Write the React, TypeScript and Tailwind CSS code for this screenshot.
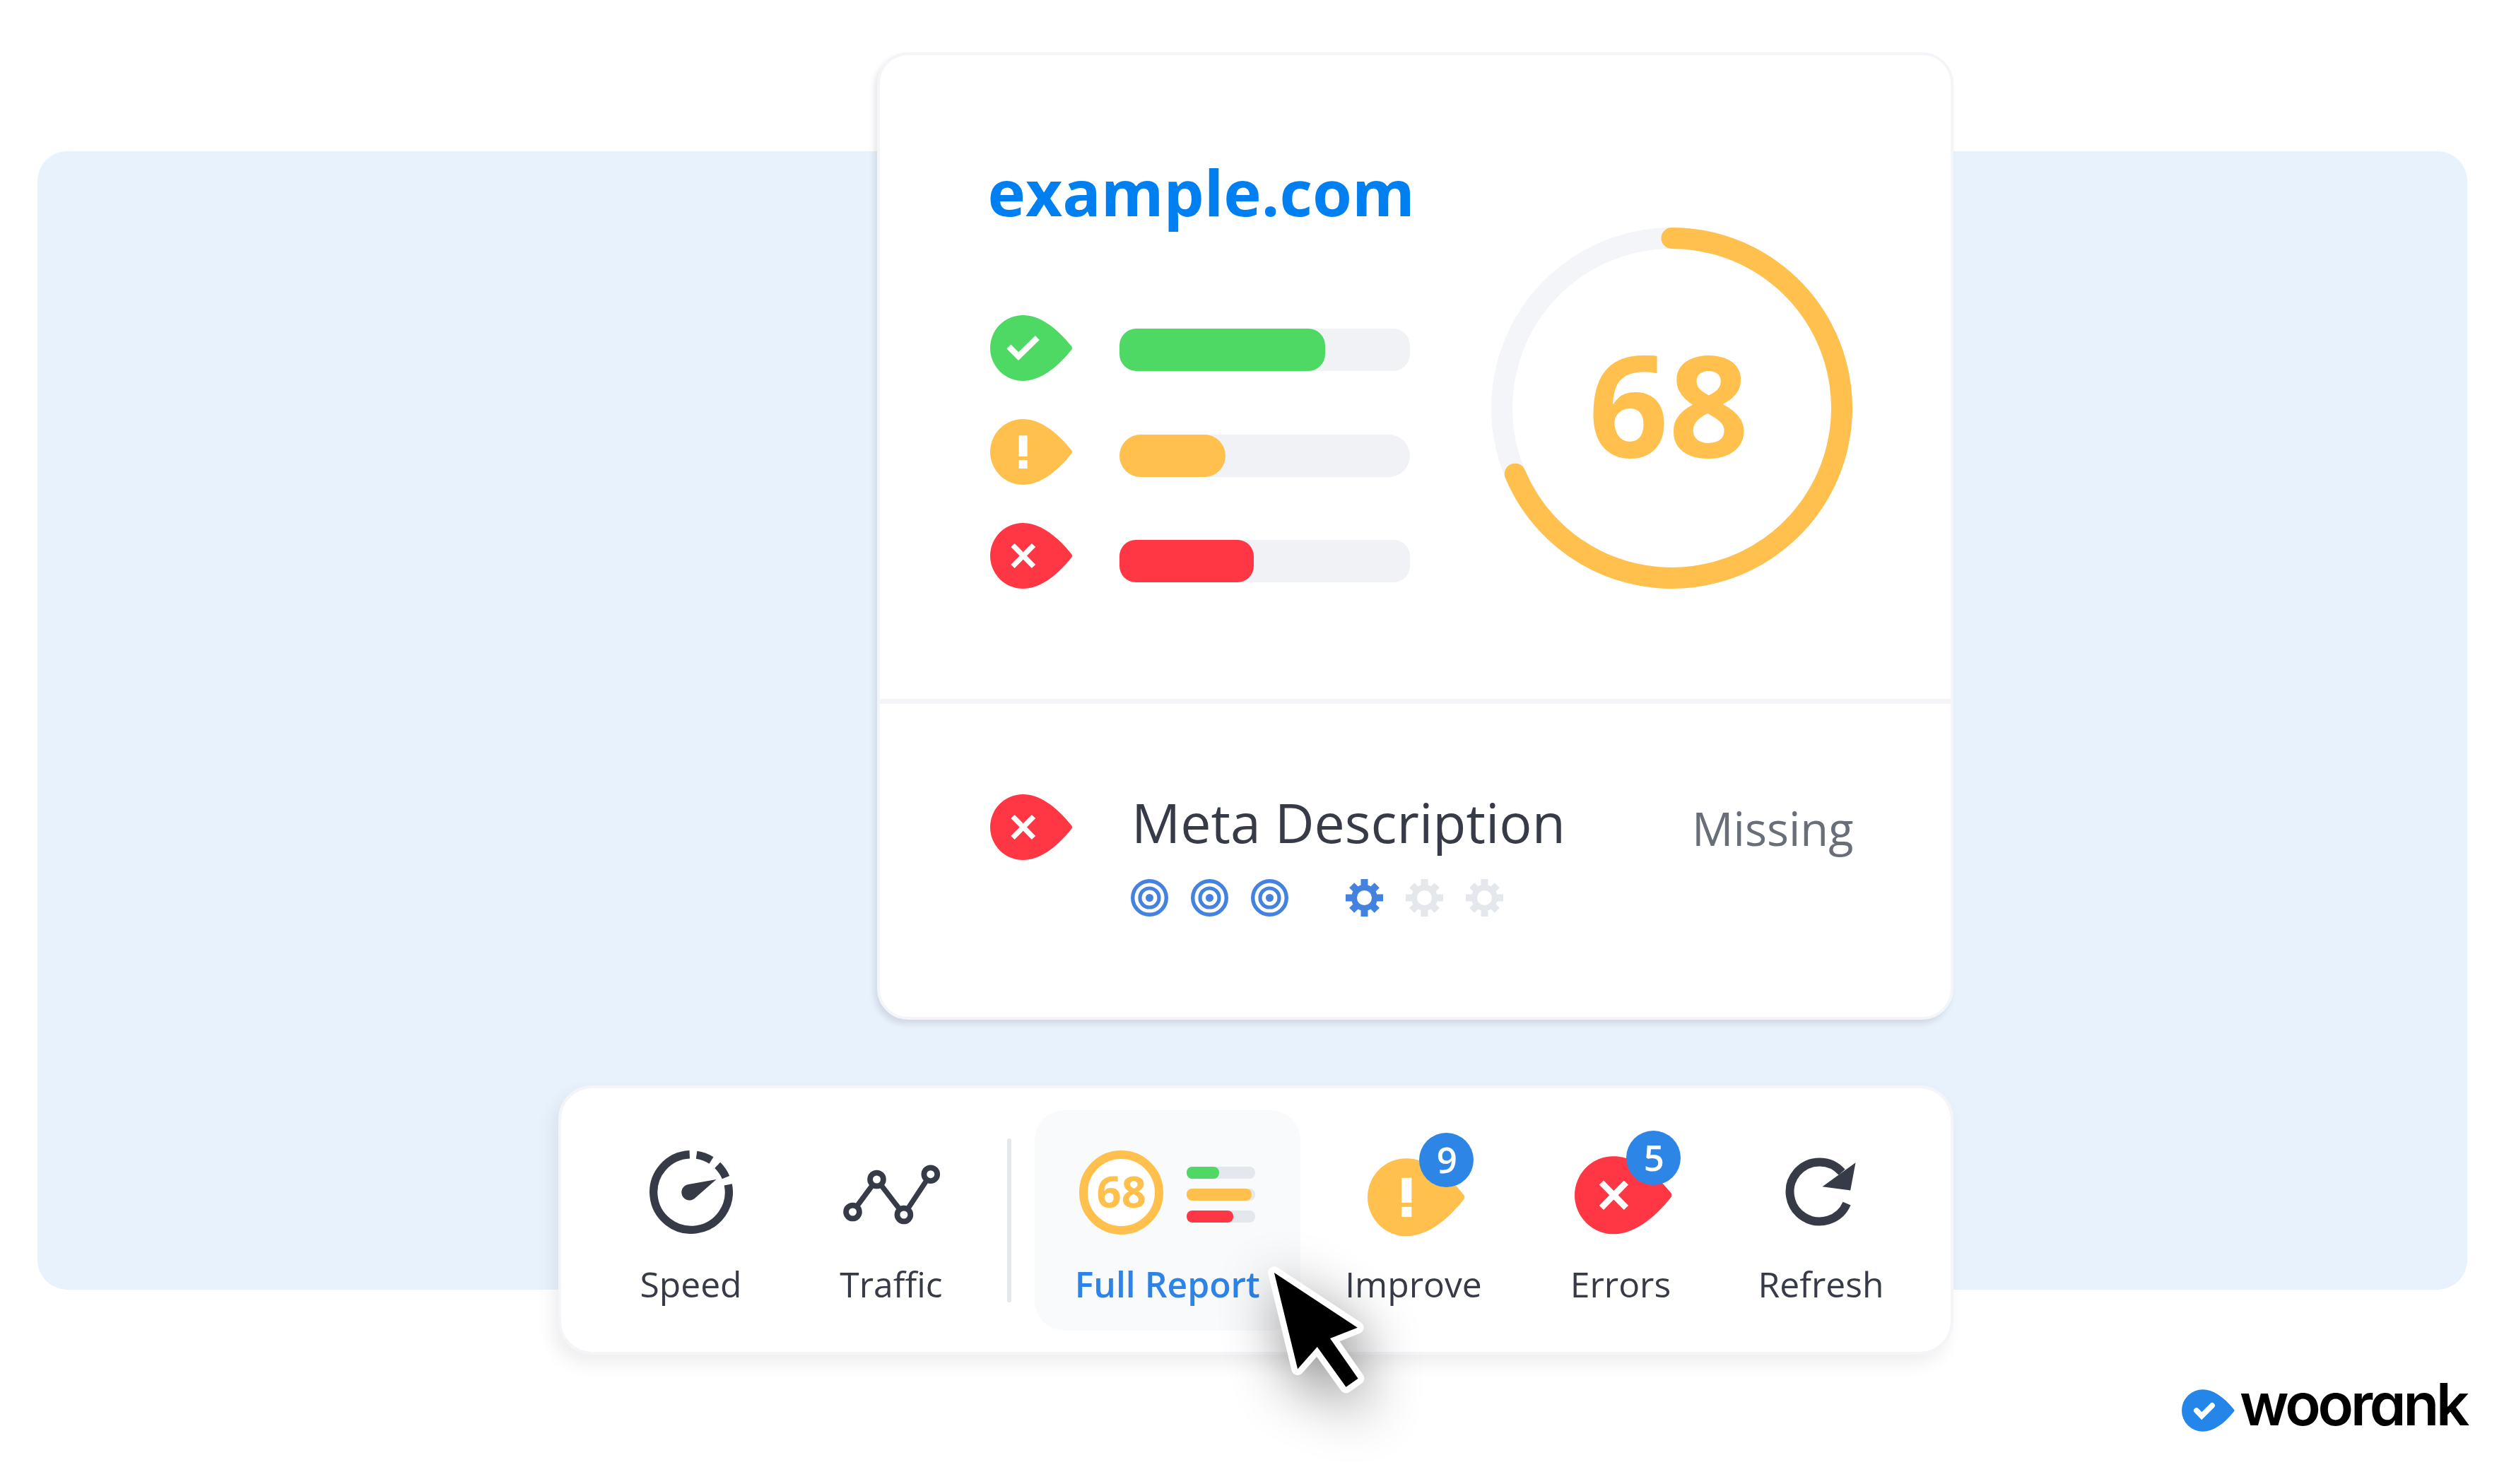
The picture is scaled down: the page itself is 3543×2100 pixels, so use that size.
import React from "react";

type Mark = "check" | "alert" | "cross";

const LEAF = "M46.5 0C68 0 92 15 115 44Q117 46.5 115 49C92 78 68 93 46.5 93A46.5 46.5 0 0 1 46.5 0Z";

function Leaf({ mark, className }: { mark: Mark; className: string }) {
  const fill = mark === "check" ? "#4dd964" : mark === "alert" ? "#ffc04d" : "#ff3745";
  return (
    <svg viewBox="0 0 116 93" className={className}>
      <path d={LEAF} fill={fill} />
      {mark === "check" && <path d="M26.4 44.5L40 58.2L66.8 32.1" fill="none" stroke="#fff" strokeWidth="8.4" />}
      {mark === "alert" && (
        <g fill="#fff">
          <rect x="40.6" y="23.3" width="12" height="29.6" />
          <rect x="40.6" y="58" width="12" height="12" />
        </g>
      )}
      {mark === "cross" && <path d="M32 31.5L61.5 61.5M61.5 31.5L32 61.5" fill="none" stroke="#fff" strokeWidth="7.4" />}
    </svg>
  );
}

function Target() {
  return (
    <svg viewBox="-26.5 -26.5 53 53" className="size-[53px]" fill="none" stroke="#4383df">
      <circle r="23.8" strokeWidth="5.4" />
      <circle r="13.5" strokeWidth="5.2" />
      <circle r="5.5" fill="#4383df" stroke="none" />
    </svg>
  );
}

function Gear({ className }: { className: string }) {
  return (
    <svg viewBox="-26.5 -26.5 53 53" className={className} stroke="currentColor" fill="none">
      <circle r="14.5" strokeWidth="8" />
      <path d="M0 -26.5V-15M0 26.5V15M-26.5 0H-15M26.5 0H15" strokeWidth="10" />
      <path d="M-17.8 -17.8L-10 -10M17.8 17.8L10 10M17.8 -17.8L10 -10M-17.8 17.8L-10 10" strokeWidth="10" />
    </svg>
  );
}

function ScoreRing() {
  return (
    <div className="mt-[244px] ml-[115px] grid size-[511px] shrink-0 place-items-center">
      <svg viewBox="-255.5 -255.5 511 511" className="col-start-1 row-start-1 size-full" fill="none" strokeWidth="30">
        <circle r="240.5" stroke="#f4f5f9" />
        <path d="M0 -240.5A240.5 240.5 0 1 1 -221.7 93.2" stroke="#ffc04d" strokeLinecap="round" />
      </svg>
      <span className="col-start-1 row-start-1 pr-[9px] pb-[14px] text-[198.5px] leading-none font-bold text-[#ffc04d]">68</span>
    </div>
  );
}

function SpeedIcon() {
  return (
    <svg viewBox="-59 -59 118 118" className="mt-[57px] size-[118px]">
      <g fill="none" stroke="#373b48" strokeWidth="11.3">
        <path d="M52.25 -10.53A53.3 53.3 0 1 1 -2.23 -53.25" />
        <path d="M7.6 -52.76A53.3 53.3 0 0 1 28.5 -45.05" />
        <path d="M37.2 -38.15A53.3 53.3 0 0 1 49 -20.9" />
      </g>
      <path d="M35.5 -18L-4 -11A11.3 11.3 0 1 0 5 8.7Z" fill="#373b48" />
    </svg>
  );
}

function TrafficIcon() {
  return (
    <svg viewBox="1191 1647 139 87" className="mt-[76px] h-[87px] w-[139px]" fill="none" stroke="#373b48">
      <path d="M1205.5 1715L1239.5 1669L1277.9 1719L1315.8 1661.7" strokeWidth="7.4" />
      <g fill="#fff" strokeWidth="7.8">
        <circle cx="1205.5" cy="1715" r="9.4" />
        <circle cx="1239.5" cy="1669" r="9.4" />
        <circle cx="1277.9" cy="1719" r="9.4" />
        <circle cx="1315.8" cy="1661.7" r="9.4" />
      </g>
    </svg>
  );
}

function RefreshIcon() {
  return (
    <svg viewBox="-48.5 -48.5 102 97" className="mt-[66.5px] h-[97px] w-[102px]">
      <path d="M38.6 16.6A42 42 0 1 1 31.7 -27.7" fill="none" stroke="#373b48" strokeWidth="12" />
      <path d="M51 -41.3L43.7 -2L4 -7.3Z" fill="#373b48" />
    </svg>
  );
}

function LeafWithBadge({ mark, count, className }: { mark: Mark; count: number; className: string }) {
  return (
    <div className={className}>
      <Leaf mark={mark} className="h-[110.5px] w-[137.5px]" />
      <span className="absolute -top-[36.5px] left-[73px] flex size-[77px] items-center justify-center rounded-full bg-[#2d85e6] pb-[2px] pl-[2px] text-[51px] leading-none font-semibold text-white">
        {count}
      </span>
    </div>
  );
}

const MINI_BARS = [
  { fill: "bg-[#4dd964]", width: 46 },
  { fill: "bg-[#ffc04d]", width: 92 },
  { fill: "bg-[#ff3745]", width: 65.5 },
];

function ReportIcon() {
  return (
    <div className="mt-[56.5px] flex h-[119px] items-start gap-[33px]">
      <div className="flex size-[119px] items-center justify-center rounded-full border-[12px] border-[#ffc04d] bg-white pb-[2px] text-[61.5px] leading-none font-bold text-[#ffc04d]">
        68
      </div>
      <div className="mt-[23px] flex flex-col gap-[14px]">
        {MINI_BARS.map((bar) => (
          <div key={bar.fill} className="h-[17px] w-[97px] rounded-[8px] bg-[#e4e7ec]">
            <div className={`h-full rounded-[8px] ${bar.fill}`} style={{ width: bar.width }} />
          </div>
        ))}
      </div>
    </div>
  );
}

function Tool({ label, className, children }: { label: string; className: string; children: React.ReactNode }) {
  return (
    <div className={`flex h-[312px] shrink-0 flex-col items-center ${className}`}>
      <div className="flex h-[216px] items-start">{children}</div>
      <span className="text-[49.8px] leading-[60px] whitespace-nowrap">{label}</span>
    </div>
  );
}

const BARS = [
  { fill: "bg-[#4dd964]", round: "rounded-[24px]", width: 291 },
  { fill: "bg-[#ffc04d]", round: "rounded-[30px]", width: 150 },
  { fill: "bg-[#ff3745]", round: "rounded-[23px]", width: 190.5 },
];

function ReportCard() {
  return (
    <section className="mt-[74px] ml-[1241px] flex h-[1369px] w-[1522.5px] flex-col rounded-[44px] border-4 border-[#f4f5f9] bg-white shadow-[-4px_6px_9px_rgba(0,0,0,0.1)]">
      <div className="flex h-[918px] shrink-0 items-start border-b-[7px] border-[#f4f5f9] pl-[156px]">
        <div className="w-[594px] shrink-0 pt-[148px]">
          <h1 className="-ml-[3.5px] text-[90.4px] leading-[90px] font-bold whitespace-nowrap text-[#0080f0]">example.com</h1>
          <div className="mt-[130px] flex justify-between">
            <div className="flex flex-col gap-[54.2px]">
              <Leaf mark="check" className="h-[93px] w-[116px]" />
              <Leaf mark="alert" className="h-[93px] w-[116px]" />
              <Leaf mark="cross" className="h-[93px] w-[116px]" />
            </div>
            <div className="mt-[19px] flex flex-col gap-[89.6px]">
              {BARS.map((bar) => (
                <div key={bar.fill} className={`h-[60px] w-[411.5px] bg-[#f1f2f6] ${bar.round}`}>
                  <div className={`h-full ${bar.round} ${bar.fill}`} style={{ width: bar.width }} />
                </div>
              ))}
            </div>
          </div>
        </div>
        <ScoreRing />
      </div>
      <div className="flex items-start pt-[128px] pr-[137px] pl-[156px]">
        <Leaf mark="cross" className="h-[93px] w-[116px] shrink-0" />
        <div className="ml-[83px]">
          <h2 className="ml-px text-[77px] leading-[80px] whitespace-nowrap text-[#373b48]">Meta Description</h2>
          <div className="mt-[40px] flex gap-[32px]">
            <Target />
            <Target />
            <Target />
            <Gear className="ml-[49px] size-[53px] text-[#4383df]" />
            <Gear className="size-[53px] text-[#e4e7ec]" />
            <Gear className="size-[53px] text-[#e4e7ec]" />
          </div>
        </div>
        <span className="mt-[8px] ml-auto text-[65px] leading-[80px] text-[#686f79]">Missing</span>
      </div>
    </section>
  );
}

function Toolbar() {
  return (
    <nav className="relative mt-[93px] ml-[790px] flex h-[381px] w-[1973.5px] items-start rounded-[48px] border-4 border-[#f4f5f9] bg-white pt-[31px] pl-[41.5px] text-[#373b48] shadow-[-8px_12px_26px_rgba(0,0,0,0.07)]">
      <Tool label="Speed" className="w-[284px]">
        <SpeedIcon />
      </Tool>
      <Tool label="Traffic" className="w-[283px]">
        <TrafficIcon />
      </Tool>
      <div className="mt-[40px] ml-[22px] h-[232px] w-[6.5px] shrink-0 rounded-full bg-[#e4e7eb]" />
      <Tool label="Full Report" className="ml-[32.5px] w-[376.5px] rounded-[42px] bg-[#f9fafc] font-semibold text-[#2e84e6]">
        <ReportIcon />
      </Tool>
      <Tool label="Improve" className="ml-[13.5px] w-[293px]">
        <LeafWithBadge mark="alert" count={9} className="relative mt-[68px] ml-[7px]" />
      </Tool>
      <Tool label="Errors" className="w-[293px]">
        <LeafWithBadge mark="cross" count={5} className="relative mt-[65px] ml-[7px]" />
      </Tool>
      <Tool label="Refresh" className="w-[274px]">
        <RefreshIcon />
      </Tool>
      <svg
        viewBox="1780 1780 160 204"
        className="absolute top-[240px] left-[986px] h-[204px] w-[160px] overflow-visible [filter:drop-shadow(7px_24px_40px_rgba(0,0,0,0.45))]"
      >
        <path
          d="M1802.9 1801L1920.8 1878.7L1882 1894L1921.6 1950.7L1904.5 1962.7L1863.8 1906L1836.1 1937.3Z"
          fill="#000"
          stroke="#fff"
          strokeWidth="17.5"
          strokeLinejoin="round"
          paintOrder="stroke"
        />
      </svg>
    </nav>
  );
}

function Logo() {
  return (
    <footer className="mt-[26px] ml-[3087px] flex items-start">
      <svg viewBox="0 0 116 93" className="mt-[22.5px] h-[60px] w-[74.5px] shrink-0">
        <path d={LEAF} fill="#2486e8" />
        <path d="M32.5 46.5L44 58.5L67 35.5" fill="none" stroke="#fff" strokeWidth="12" strokeLinecap="round" />
      </svg>
      <span className="ml-[7.5px] font-['Inter'] text-[83px] leading-[88px] font-semibold tracking-[-4.2px] text-black [font-feature-settings:'cv11']">
        woorank
      </span>
    </footer>
  );
}

export default function App() {
  return (
    <div className="relative isolate flex h-[2100px] w-[3543px] flex-col overflow-hidden bg-white font-['Open_Sans',sans-serif]">
      <div className="absolute top-[214px] left-[53px] -z-10 h-[1611px] w-[3438px] rounded-[42px] bg-[#e8f2fd]" />
      <ReportCard />
      <Toolbar />
      <Logo />
    </div>
  );
}
